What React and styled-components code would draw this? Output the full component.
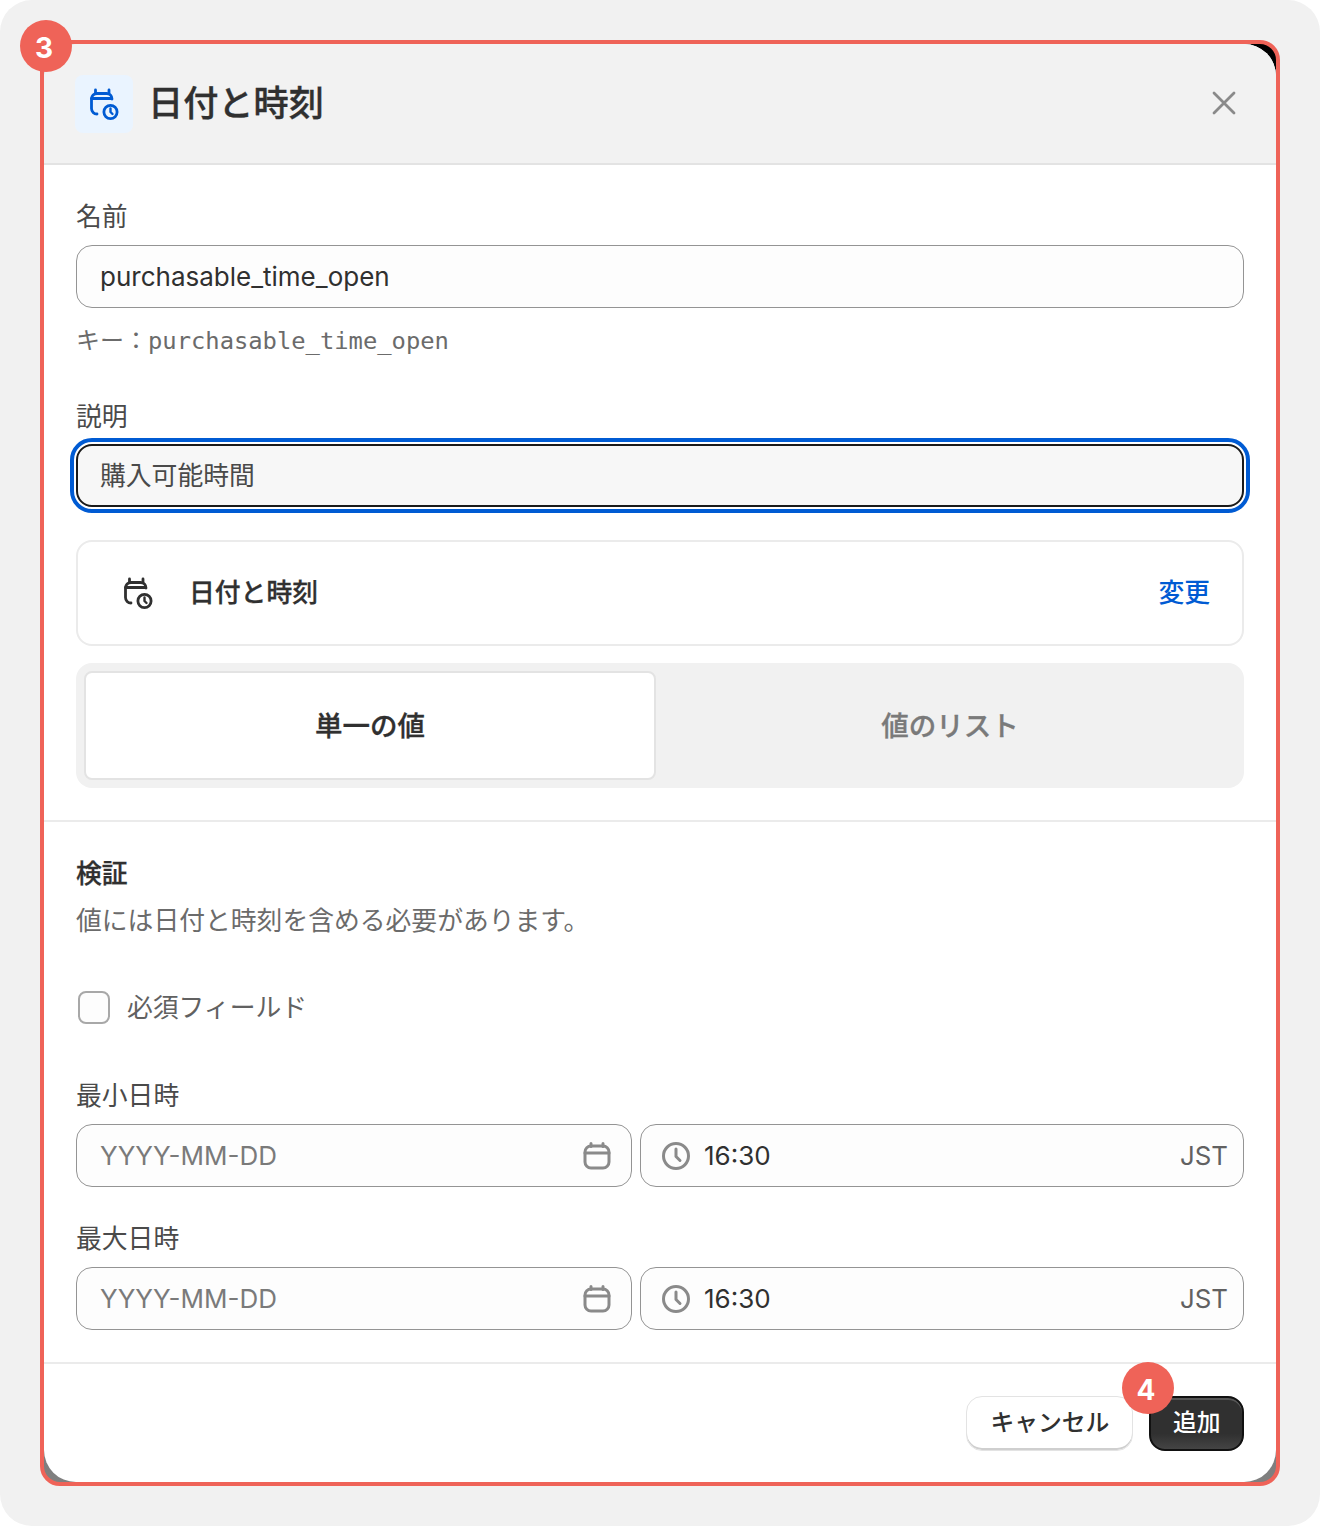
import React from "react";
import styled, { createGlobalStyle } from "styled-components";

const Global = createGlobalStyle`
  html, body { margin: 0; padding: 0; background: #fff; }
  body { font-family: Inter, "Noto Sans CJK JP", sans-serif; color: #303030; }
  * { box-sizing: border-box; }
`;
const Page = styled.div`
  width: 1320px; height: 1526px; padding: 40px; background: #f1f1f1; border-radius: 32px;
`;
const Frame = styled.div`
  position: relative; height: 1446px; border: 4px solid #ef6358; border-radius: 20px;
  background: linear-gradient(180deg, #000 0%, #808080 100%);
`;
const Badge = styled.div`
  position: absolute; z-index: 2; width: 52px; height: 52px; border-radius: 50%; padding: 1px 4px 0 0;
  background: #ef6358; color: #fff; font: 700 28px/54px Inter, sans-serif; text-align: center;
  ${p => p.$corner === "tl" ? "left: -24px; top: -24px;" : "right: 102px; bottom: 68px;"}
`;
const Modal = styled.div`
  height: 100%; background: #fff; border-radius: 32px; overflow: hidden; display: flex; flex-direction: column;
`;
const Header = styled.header`
  height: 121px; flex: none; background: #f2f2f2; border-bottom: 2px solid #e3e3e3;
  display: flex; align-items: center; padding: 0 32px 0 31px;
`;
const IconTile = styled.div`
  width: 58px; height: 58px; border-radius: 8px; background: #eaf4ff; color: #005bd3;
  display: flex; align-items: center; justify-content: center; margin-right: 15px;
`;
const Title = styled.h1`
  margin: 0 0 2px; font-size: 35.2px; line-height: 48px; font-weight: 500; color: #303030; flex: 1;
  -webkit-text-stroke: 0.35px currentColor;
`;
const CloseBtn = styled.div`
  width: 28px; height: 28px; color: #8a8a8a; display: flex; margin: 0 6px 2px 0;
`;
const Section = styled.section`
  padding: ${p => p.$pad || "32px 32px 32px"}; border-bottom: 2px solid #ebebeb;
  flex: none;
`;
const Label = styled.label`
  display: block; font-size: 25.8px; line-height: 40px; color: #4a4a4a; margin: ${p => p.$m || "0 0 8px"};
`;
const Input = styled.div`
  height: 63px; border: 1px solid #949494; border-radius: 16px; background: #fdfdfd; line-height: 40px;
  display: flex; align-items: center; padding: 0 23px; font-size: 26px; color: #303030;
`;
const Focused = styled(Input)`
  background: #f7f7f7; border: 2px solid #1a1a1a; color: #4a4a4a; outline: 4px solid #005bd3; outline-offset: 2px;
  margin: -1px 0 0; padding: 0 22px; font-size: 25.8px;
`;
const Help = styled.p`
  margin: 16px 0 39px; font-size: 24px; line-height: 34px; color: #6b6b6b;
`;
const Mono = styled.span`
  font-family: "DejaVu Sans Mono", monospace; font-size: 23.8px;
`;
const Card = styled.div`
  margin-top: 33px; height: 106px; border: 2px solid #ebebeb; border-radius: 16px; line-height: 40px;
  display: flex; align-items: center; padding: 0 32px 0 44px;
`;
const CardIcon = styled.div`
  width: 32px; height: 32px; color: #303030; margin-right: 35px;
`;
const CardTitle = styled.div`
  flex: 1; font-size: 25.8px; font-weight: 500; color: #303030; -webkit-text-stroke: 0.3px currentColor;
`;
const Link = styled.a`
  font-size: 25.8px; font-weight: 500; color: #005bd3;
`;
const Segment = styled.div`
  margin-top: 17px; height: 125px; background: #f1f1f1; border-radius: 16px; padding: 8px;
  display: grid; grid-template-columns: 572px 1fr;
`;
const Tab = styled.div`
  display: flex; align-items: center; justify-content: center; font-size: 27.5px; font-weight: 500; line-height: 40px;
  border-radius: 8px; color: ${p => p.$active ? "#303030" : "#7a7a7a"}; -webkit-text-stroke: 0.3px currentColor;
  ${p => p.$active ? "background: #fff; border: 2px solid #e3e3e3;" : "padding-left: 8px;"}
`;
const Strong = styled.h2`
  margin: 0 0 7px; font-size: 25.8px; line-height: 40px; font-weight: 500; color: #303030;
  -webkit-text-stroke: 0.3px currentColor;
`;
const Desc = styled.p`
  margin: 0 0 50px; font-size: 25.8px; line-height: 40px; color: #6b6b6b;
`;
const CheckRow = styled.div`
  display: flex; align-items: center; height: 33px; padding-left: 2px; gap: 17px; line-height: 40px;
  font-size: 25.8px; color: #616161;
`;
const Box = styled.span`
  width: 32px; height: 33px; border: 2px solid #a8a8a8; border-radius: 8px; background: #fdfdfd;
`;
const DateRow = styled.div`
  display: grid; grid-template-columns: 556px 604px; gap: 8px;
`;
const DateInput = styled(Input)`
  justify-content: space-between; padding: 0 20px 0 23px; color: #7a7a7a;
`;
const TimeInput = styled(Input)`
  padding: 0 15px 0 20px; gap: 13px;
`;
const Muted = styled.span`
  margin-left: auto; color: #616161; font-size: 25.8px;
`;
const IconWrap = styled.span`
  display: flex; color: #8a8a8a;
`;
const Footer = styled.footer`
  flex: 1; display: flex; justify-content: flex-end; align-items: flex-start; padding: 32px; gap: 16px;
`;
const Button = styled.button`
  height: 55px; padding: 0 23px 2px; border-radius: 16px; font-family: inherit; font-size: 23.8px; font-weight: 500; line-height: 36px;
  background: #fff; color: #303030; border: 1.5px solid #e3e3e3;
  box-shadow: inset 0 -2px 0 #cfcfcf;
`;
const Primary = styled(Button)`
  padding: 0 21.5px 2px;
  background: linear-gradient(180deg, #303030 0%, #303030 70%, #444 100%); color: #fff; border: 2px solid #111;
  box-shadow: inset 0 2px 0 #555;
`;

const CalClock = () => (
  <svg width="32" height="32" viewBox="0 0 32 32" fill="none" stroke="currentColor" strokeWidth="2.8" strokeLinecap="round" strokeLinejoin="round">
    <path d="M7.5 2v3.5M21 2v3.5" />
    <path d="M24 11A5.5 5.5 0 0 0 18.5 5.5H9A5.5 5.5 0 0 0 3.5 11V20.5A5.5 5.5 0 0 0 9 26" />
    <path d="M3.5 10.5H23" />
    <circle cx="22.5" cy="24" r="6.6" />
    <path d="M22.5 20.5V24l2 2" strokeWidth="2.4" />
  </svg>
);
const Calendar = () => (
  <svg width="28" height="28" viewBox="0 0 28 28" fill="none" stroke="currentColor" strokeWidth="3" strokeLinecap="round" strokeLinejoin="round">
    <path d="M8 1.5v3M20 1.5v3" />
    <rect x="2" y="4" width="24" height="22" rx="6" />
    <path d="M2 11h24" />
  </svg>
);
const Clock = () => (
  <svg width="30" height="30" viewBox="0 0 30 30" fill="none" stroke="currentColor" strokeWidth="3" strokeLinecap="round" strokeLinejoin="round">
    <circle cx="15" cy="15" r="12.5" />
    <path d="M15 8v7.5l4 4" />
  </svg>
);
const Close = () => (
  <svg width="28" height="28" viewBox="0 0 28 28" fill="none" stroke="currentColor" strokeWidth="2.8" strokeLinecap="round">
    <path d="M4 4l20 20M24 4L4 24" />
  </svg>
);

const DateTime = () => (
  <DateRow>
    <DateInput>YYYY-MM-DD<IconWrap><Calendar /></IconWrap></DateInput>
    <TimeInput><IconWrap><Clock /></IconWrap>16:30<Muted>JST</Muted></TimeInput>
  </DateRow>
);

export default function App() {
  return (
    <Page>
      <Global />
      <Frame>
        <Badge $corner="tl">3</Badge>
        <Badge $corner="br">4</Badge>
        <Modal>
          <Header>
            <IconTile><CalClock /></IconTile>
            <Title>日付と時刻</Title>
            <CloseBtn><Close /></CloseBtn>
          </Header>
          <Section>
            <Label>名前</Label>
            <Input>purchasable_time_open</Input>
            <Help>キー：<Mono>purchasable_time_open</Mono></Help>
            <Label>説明</Label>
            <Focused>購入可能時間</Focused>
            <Card>
              <CardIcon><CalClock /></CardIcon>
              <CardTitle>日付と時刻</CardTitle>
              <Link>変更</Link>
            </Card>
            <Segment>
              <Tab $active>単一の値</Tab>
              <Tab>値のリスト</Tab>
            </Segment>
          </Section>
          <Section $pad="32px 32px 32px">
            <Strong>検証</Strong>
            <Desc>値には日付と時刻を含める必要があります。</Desc>
            <CheckRow><Box />必須フィールド</CheckRow>
            <Label $m="52px 0 8px">最小日時</Label>
            <DateTime />
            <Label $m="32px 0 8px">最大日時</Label>
            <DateTime />
          </Section>
          <Footer>
            <Button>キャンセル</Button>
            <Primary>追加</Primary>
          </Footer>
        </Modal>
      </Frame>
    </Page>
  );
}
